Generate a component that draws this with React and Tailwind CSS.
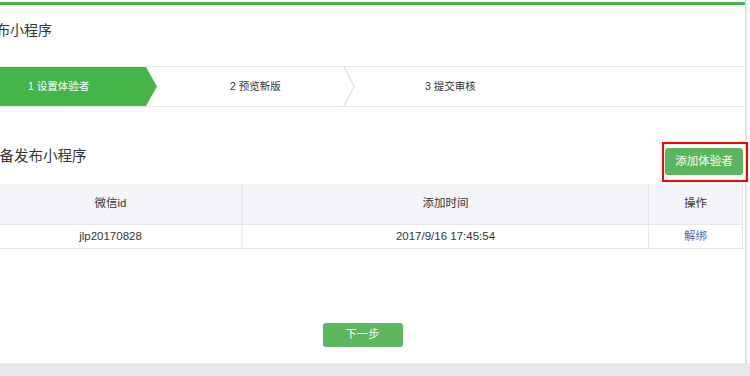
import React from 'react';

const FONT = "font-['Liberation_Sans','Noto_Sans_CJK_SC',sans-serif]";

const steps = [
  { label: '1 设置体验者', active: true },
  { label: '2 预览新版', active: false },
  { label: '3 提交审核', active: false },
];

const StepBar = () => (
  <div className="relative flex h-[41px] border-y border-[#e7e7eb] text-[10.5px] leading-[39px]">
    {/* active step, arrow shaped */}
    <div className="h-full w-[157px] bg-[#44b549] pl-[28px] text-white [clip-path:polygon(0_0,146px_0,157px_50%,146px_100%,0_100%)]">
      {steps[0].label}
    </div>
    <div className="h-full w-[198px] pl-[73px] text-[#353535]">{steps[1].label}</div>
    <div className="h-full flex-1 pl-[70px] text-[#353535]">{steps[2].label}</div>

    {/* chevron between step 2 and 3 */}
    <svg className="absolute left-[343px] top-0" width="13" height="39" viewBox="0 0 13 39">
      <polyline points="1,0 11,19.5 1,39" fill="none" stroke="#e4e4e6" strokeWidth="1.5" />
    </svg>
  </div>
);

const UserTable = () => (
  <div className="w-[763px] text-[11.5px] text-[#353535]">
    <div className="flex h-[41px] items-center bg-[#f4f5f9] border-b border-[#e7e7eb]">
      <div className="flex h-full w-[261px] items-center justify-center">微信id</div>
      <div className="flex h-full w-[407px] items-center justify-center border-l-[2px] border-[#e9eaee]">添加时间</div>
      <div className="flex h-full flex-1 items-center justify-center border-x border-[#e7e7eb]">操作</div>
    </div>
    <div className="flex h-[24px] items-center border-b border-[#e7e7eb]">
      <div className="flex h-full w-[261px] items-center justify-center">jlp20170828</div>
      <div className="flex h-full w-[407px] items-center justify-center border-l-[2px] border-[#eeeff2]">2017/9/16 17:45:54</div>
      <div className="flex h-full flex-1 items-center justify-center border-x border-[#e7e7eb] text-[#4a6db4]">解绑</div>
    </div>
  </div>
);

export default function App() {
  return (
    <div className={`${FONT} flex h-[376px] w-[750px] flex-col overflow-hidden bg-white`}>
      <div className="h-[363px] w-[747px] border-r-[2px] border-[#e3e4e8] pt-[2px]">
        <div className="h-[3px] w-full bg-[#44b549]" />

        {/* page title, cropped at the left edge */}
        <div className="h-[61px] pt-[15px]">
          <h1 className="-ml-[18px] text-[14px] leading-[20px] text-[#353535]">发布小程序</h1>
        </div>

        <StepBar />

        <div className="-ml-[20px] w-[763px]">
          <div className="relative mt-[41px] mb-[9px] flex h-[27px] items-start justify-between">
            <h2 className="pl-[5px] text-[14.5px] leading-[16px] text-[#353535]">准备发布小程序</h2>
            <button className="h-[27px] w-[78px] rounded-[3px] bg-[#5cb65d] text-[11.5px] text-white">
              添加体验者
            </button>
            {/* highlight frame */}
            <div className="absolute right-[-5px] top-[-6px] h-[40px] w-[86px] border-[2px] border-[#ff0000]" />
          </div>

          <UserTable />

          <div className="mt-[74px] flex justify-center pl-[2px]">
            <button className="h-[24px] w-[80px] rounded-[3px] bg-[#5cb65d] text-[11.5px] text-white">
              下一步
            </button>
          </div>
        </div>
      </div>
      <div className="h-[13px] w-full bg-[#e7e8eb]" />
    </div>
  );
}
